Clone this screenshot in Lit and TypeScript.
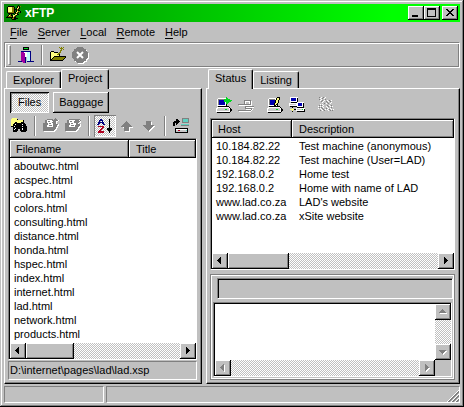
import { LitElement, html, svg, css } from "lit";
import { customElement, property, state } from "lit/decorators.js";
import { classMap } from "lit/directives/class-map.js";

const PALETTE: Record<string, string> = {
  k: "#000000",
  w: "#ffffff",
  y: "#ffff80",
  o: "#808000",
  g: "#00d820",
  b: "#0000b0",
  n: "#000080",
  c: "#60d0c0",
  s: "#c0ffff",
  d: "#808080",
  l: "#c8c8c8",
  m: "#a000a0",
  r: "#b00020",
};

const ICONS: Record<string, string[]> = {
  app: [
    "............k...",
    "..kkkkkk...koko.",
    ".kyyyyook..kyk..",
    ".kyyyyook.kyok..",
    ".kyyyyookkkok...",
    ".kyyyyook.kokk..",
    ".kyyyyook.kyook.",
    ".kooooookkyok.k.",
    "..kkkkkk.kok....",
    "...kok..kyykk...",
    "..kyokkyyok.....",
    ".kooookyok......",
    "kkkkkkkokk......",
    ".....kookkkk....",
    "......kkkk......",
  ],
  exit: [
    ".....kkkkkk.....",
    ".....kggggk.....",
    ".....kkkkkk.....",
    "................",
    "...nnnnnnnnnn...",
    "...mmmwwwsssn...",
    "...mmmmwwsssn...",
    "...mmmmwwsssn...",
    "...mmmmwwsssn...",
    "...mmmmwwsssn...",
    "...mmmmn.sssn...",
    "...mmmmn.sssn...",
    "...mmmmn.sssn...",
    "...mmmmn.sssn...",
    "nnnnmmmn.nnnnnnn",
    ".....mmn........",
  ],
  open: [
    ".........o.o.o..",
    "..........ooo...",
    "...........o.o..",
    "..........oo....",
    ".kkk......o.....",
    "kyyykkkk.oo.....",
    "kyyyyyyyoo......",
    "kyyyyyyook......",
    "kyyyyyyyyk......",
    "kyyykkkkkkkkkkkk",
    "kyykoooooooooook",
    "kykoooooooooook.",
    "kkoooooooooook..",
    "kkkkkkkkkkkkk...",
  ],
  find: [
    ".yyyyy..........",
    "yyyyyyk.........",
    "yyyyyyyyyyyyk...",
    "yyyyyyyyyyyyk...",
    "yyyykkyyyykkk...",
    "yyykkkkkkkkkkk..",
    "yykkwkkkkkkwkkk.",
    "yykkkkkkkkkkkkk.",
    "kkkwkkkkkkkwkkkk",
    "..kkkkkkkkkkkkkk",
    "..kkwkkkkkkwkkkk",
    "..kwkkk..kkwkkkk",
    "..kkkkk..kkkkkkk",
    "..kkkk....kkkkk.",
  ],
  addPage: [
    "............d...",
    "....dddddd.ddd..",
    "..ddwwwwwddddddw",
    "..ddwddwwwdddww.",
    "..ddwwwwwddddw..",
    "dddddwddwwdddw..",
    "dddddwwwwwdddddw",
    "ddddwwdddwddddww",
    "ddddwwwwwwddddw.",
    "dddddddddddddww.",
    "dddddddddddddw..",
    "ddddddddddddww..",
    "dddddddddddww...",
    ".wwwwwwwwwww....",
  ],
  removePage: [
    "................",
    "....ddddddddddd.",
    "..ddwwwwwwddddwd",
    "..ddwddwwddddddw",
    "..ddwwwwwdddddww",
    "dddddwddwwwddw..",
    "dddddwwwwwwddddw",
    "ddddwwdddwdddddw",
    "ddddwwwwwwddddww",
    "dddddddddddddww.",
    "dddddddddddddw..",
    "ddddddddddddww..",
    "dddddddddddww...",
    ".wwwwwwwwwww....",
  ],
  sort: [
    "................",
    "...nn.......k...",
    "..nnnn......k...",
    "..n..n......k...",
    ".nnnnnn.....k...",
    ".nn..nn.....k...",
    "nn....nn....k...",
    "............k...",
    ".rrrrrr.....k...",
    ".....rr.....k...",
    "....rr....kkkkk.",
    "...rr.....kkkkk.",
    "..rr.......kkk..",
    ".rrrrrr.....k...",
    ".rrrrrr.....k...",
  ],
  up: [
    "................",
    "................",
    "................",
    ".......d........",
    "......ddd.......",
    ".....ddddd......",
    "....ddddddd.....",
    "...ddddddddd....",
    "..ddddddddddd...",
    "....wdddddwwww..",
    ".....dddddw.....",
    ".....dddddw.....",
    ".....dddddw.....",
    "......wwwww.....",
  ],
  down: [
    "................",
    "................",
    "................",
    ".....ddddd......",
    ".....dddddw.....",
    ".....dddddw.....",
    ".....dddddw.....",
    "..ddddddddddd...",
    "...dddddddddww..",
    "....dddddddww...",
    ".....dddddww....",
    "......dddww.....",
    ".......dww......",
    "........w.......",
  ],
  transfer: [
    ".........ddddddd",
    "...kk....dcccccd",
    "...kkk...dcccccd",
    ".kkkkkk..dcccccd",
    "kkkkkk...ddddddd",
    "kk.kk...........",
    "kk.k....cccccccc",
    "kk......dddddddd",
    "................",
    "................",
    "..kkkkkkkkkkkkk.",
    "..kwwwwwwwwwwwk.",
    "..kllrrllllllck.",
    "..klllllllllllk.",
    "..kkkkkkkkkkkkk.",
  ],
  connect: [
    "..........g.....",
    ".lwwwwwwwwgg....",
    ".wddddddgggggg..",
    ".wdbbbbbgggggggg",
    ".wdbbbbbggggggg.",
    ".wdbbbbbbwggg...",
    ".wdbbbbbbwgg....",
    ".wdbbbbbbwk.....",
    ".wwwwwwwwwk.....",
    "..kkkkkkkkkkk...",
    ".wwwwwwwwwwwwk..",
    "wwlllllllllllwk.",
    "wllllllllggllwkk",
    "wllllllllllllwkk",
    "wwwwwwwwwwwwwwk.",
    ".kkkkkkkkkkkkk..",
  ],
  disconnect: [
    "................",
    "................",
    "................",
    "......ddddddd...",
    "......dwwwwwdw..",
    "......dw...wdw..",
    "......dw...wdw..",
    "dddddddddddddw..",
    ".wwwwwwwwwwwww..",
    ".......ddddddddd",
    ".......dwwwwwwww",
    ".......ddddddd..",
    "........wwwwwdw.",
    "dddddddddddddw..",
    ".wwwwwwwwwwww...",
  ],
  edit: [
    "..........kkk...",
    ".lwwwwwwwkyyk...",
    ".wddddddwkyyk...",
    ".wdbbbbbkyyk....",
    ".wdbbbbbkyyk....",
    ".wdbbbbbkyyk....",
    ".wdbbbbkyyk.....",
    ".wdbbbbkykk.....",
    ".wwwwwwkkwk.....",
    "..kkkkkkkkkkk...",
    ".wwwwwwwwwwwwk..",
    "wwlllllllllllwk.",
    "wllllllllggllwkk",
    "wllllllllllllwkk",
    "wwwwwwwwwwwwwwk.",
    ".kkkkkkkkkkkkk..",
  ],
  network: [
    ".wwwwwwww.......",
    ".wbbbbbwk.......",
    ".wbbbbbwk.......",
    ".wbbbbbwk.......",
    ".wwwwwwwk.......",
    "..kkkkkkwwwwwww.",
    "wwwwwwwwwbbbbwk.",
    "wllllllwwbbbbwk.",
    "wwwwwwwwwbbbbwk.",
    ".kkkkkkkwwwwwwk.",
    "...k....kkkkkkk.",
    "...y...wwwwwwwww",
    ".yyyykkwlllllgwk",
    "...y...wwwwwwwwk",
    "...k....kkkkkkkk",
  ],
  dimmed: [
    ".d.w.d.w........",
    "..w.d.w.........",
    ".d.w...d........",
    "..w.d.w..w.d.w..",
    "...d.w..d.w.d...",
    "....w....d...w..",
    "......d.w.d.w...",
    "..w.w...........",
    ".d.d.w...d.w.d..",
    "w.w.w...w.d.w.w.",
    ".d.d.w...w...d..",
    "w.w.d...d.w.w...",
    "...w.d.w.w.d.w.w",
    "..d.w.d...w.d.d.",
  ],
};

/** Draws a pixel icon, merging equal neighbours in a row into one run. */
function icon(name: string) {
  const runs: { x: number; y: number; w: number; fill: string }[] = [];
  ICONS[name].forEach((row, y) => {
    for (const m of row.matchAll(/([a-z])\1*/g)) {
      runs.push({ x: m.index ?? 0, y, w: m[0].length, fill: PALETTE[m[1]] });
    }
  });
  return html`<svg class="icon" viewBox="0 0 16 16" width="16" height="16" aria-hidden="true">
    ${runs.map((r) => svg`<rect x=${r.x} y=${r.y} width=${r.w} height="1" fill=${r.fill}></rect>`)}
  </svg>`;
}

const base = css`
  * {
    box-sizing: border-box;
  }
  button,
  input,
  textarea {
    font: inherit;
    color: inherit;
    margin: 0;
    padding: 0;
    border: 0;
    border-radius: 0;
    background: transparent;
    outline: none;
  }
  svg {
    display: block;
    flex: none;
    shape-rendering: crispEdges;
  }
  .raised {
    background: #c0c0c0;
    box-shadow:
      inset -1px -1px #000,
      inset 1px 1px #fff,
      inset -2px -2px #808080;
  }
  .dither {
    background: repeating-conic-gradient(#fff 0% 25%, #c0c0c0 0% 50%) 0 0 / 2px 2px;
  }
`;

const ARROWS: Record<string, string> = {
  left: "M9 4v7h-1v-1h-1v-1h-1v-1h-1v-1h1v-1h1v-1h1v-1z",
  right: "M6 4v7h1v-1h1v-1h1v-1h1v-1h-1v-1h-1v-1h-1v-1z",
  up: "M4 9h7v-1h-1v-1h-1v-1h-1v-1h-1v1h-1v1h-1v1h-1z",
  down: "M4 6h7v1h-1v1h-1v1h-1v1h-1v-1h-1v-1h-1v-1h-1z",
};

@customElement("scroll-bar")
export class ScrollBar extends LitElement {
  @property({ type: Boolean, reflect: true }) vertical = false;
  @property({ type: Boolean }) disabled = false;
  @property({ type: Number }) thumb = 0;

  static styles = [
    base,
    css`
      :host {
        display: flex;
        height: 16px;
      }
      :host([vertical]) {
        flex-direction: column;
        width: 16px;
        height: auto;
      }
      .arrow {
        width: 16px;
        height: 16px;
        flex: none;
      }
      .track {
        flex: 1;
        display: flex;
      }
      .dim {
        fill: #808080;
        filter: drop-shadow(1px 1px #fff);
      }
    `,
  ];

  private arrow(dir: string) {
    return html`<button class="arrow raised" aria-label="Scroll ${dir}" ?disabled=${this.disabled}>
      <svg class=${classMap({ dim: this.disabled })} width="16" height="16" viewBox="0 0 16 16">
        <path d=${ARROWS[dir]}></path>
      </svg>
    </button>`;
  }

  render() {
    return html`
      ${this.arrow(this.vertical ? "up" : "left")}
      <div class="track dither">
        ${this.thumb ? html`<div class="raised" style="width:${this.thumb}%"></div>` : ""}
      </div>
      ${this.arrow(this.vertical ? "down" : "right")}
    `;
  }
}

const FILES = [
  "aboutwc.html",
  "acspec.html",
  "cobra.html",
  "colors.html",
  "consulting.html",
  "distance.html",
  "honda.html",
  "hspec.html",
  "index.html",
  "internet.html",
  "lad.html",
  "network.html",
  "products.html",
];

const HOSTS = [
  ["10.184.82.22", "Test machine (anonymous)"],
  ["10.184.82.22", "Test machine (User=LAD)"],
  ["192.168.0.2", "Home test"],
  ["192.168.0.2", "Home with name of LAD"],
  ["www.lad.co.za", "LAD's website"],
  ["www.lad.co.za", "xSite website"],
];

@customElement("app-root")
export class AppRoot extends LitElement {
  @state() private leftTab = "Project";
  @state() private rightTab = "Status";

  static styles = [
    base,
    css`
      :host {
        display: block;
        font: 11px/14px "Liberation Sans", Arial, sans-serif;
        color: #000;
      }
      .window {
        min-height: 100vh;
        padding: 4px;
        display: flex;
        flex-direction: column;
        background: #c0c0c0;
        box-shadow:
          inset -1px -1px #000,
          inset 1px 1px #c0c0c0,
          inset -2px -2px #808080,
          inset 2px 2px #fff;
      }
      .title {
        height: 18px;
        padding: 0 2px;
        display: flex;
        align-items: center;
        gap: 3px;
        background: linear-gradient(90deg, #008800, #00ff00 85%);
        color: #fff;
      }
      .title h1 {
        flex: 1;
        margin: 0;
        font-size: 12px;
        line-height: 14px;
      }
      .winbtns {
        display: flex;
      }
      .winbtns button {
        width: 16px;
        height: 14px;
      }
      .winbtns .close {
        margin-left: 2px;
      }
      .menu {
        height: 20px;
        padding: 0 1px;
        display: flex;
        align-items: center;
      }
      .menu button {
        padding: 0 5px;
      }
      .menu u {
        text-underline-offset: 2px;
      }
      .toolbar {
        height: 26px;
        padding: 0 3px;
        display: flex;
        align-items: center;
        border: 1px solid #808080;
        border-right-color: #fff;
        border-bottom-color: #fff;
        box-shadow:
          inset 1px 1px #fff,
          inset -1px -1px #808080;
      }
      .tool {
        width: 22px;
        height: 22px;
        flex: none;
        display: grid;
        place-items: center;
      }
      .tool.on {
        box-shadow:
          inset 1px 1px #808080,
          inset -1px -1px #fff;
      }
      .sep {
        width: 2px;
        height: 20px;
        margin: 0 4px;
        border-left: 1px solid #808080;
        border-right: 1px solid #fff;
      }
      .grip {
        width: 3px;
        height: 20px;
        margin-right: 4px;
        border: 1px solid #fff;
        border-right-color: #808080;
        border-bottom-color: #808080;
      }
      .main {
        flex: 1;
        margin: 1px 0 2px;
        display: grid;
        grid-template-columns: 198px minmax(0, 1fr);
        gap: 4px;
      }
      .pane {
        display: flex;
        flex-direction: column;
        min-width: 0;
      }
      .tabs {
        height: 19px;
        padding-left: 2px;
        display: flex;
        align-items: flex-end;
      }
      .tab {
        height: 17px;
        padding: 0 6px;
        border-top: 1px solid #fff;
        border-left: 1px solid #fff;
        border-right: 1px solid #000;
        border-radius: 2px 2px 0 0;
        box-shadow: inset -1px 0 #808080;
      }
      .tab.on {
        position: relative;
        height: 20px;
        margin-bottom: -1px;
        padding: 0 6px 3px;
        background: #c0c0c0;
      }
      .sheet {
        flex: 1;
        display: flex;
        flex-direction: column;
        padding: 3px 4px 3px 3px;
        border: 1px solid #fff;
        border-right-color: #000;
        border-bottom-color: #000;
        box-shadow: inset -1px -1px #808080;
      }
      .switch {
        display: flex;
        gap: 4px;
        padding-left: 2px;
      }
      .switch button {
        height: 21px;
        padding: 0 8px 2px;
      }
      .switch .raised {
        padding: 0 6px 2px;
      }
      .switch .pressed {
        box-shadow:
          inset 1px 1px #000,
          inset -1px -1px #fff,
          inset 2px 2px #808080;
      }
      .tools {
        display: flex;
        align-items: center;
        height: 25px;
      }
      .tools.hosts {
        height: 26px;
        padding-left: 3px;
      }
      .gap {
        width: 7px;
      }
      .list {
        flex: 1;
        display: flex;
        flex-direction: column;
        background: #fff;
        border: 1px solid #808080;
        border-right-color: #fff;
        border-bottom-color: #fff;
        box-shadow: inset 1px 1px #000;
        padding: 1px 0 0 1px;
      }
      table {
        width: 100%;
        table-layout: fixed;
        border-collapse: separate;
        border-spacing: 0;
      }
      .first {
        width: 119px;
      }
      .hosts-first {
        width: 80px;
      }
      th {
        height: 18px;
        padding: 0 6px;
        font-weight: normal;
        text-align: left;
      }
      td {
        height: 14px;
        padding: 0 4px;
        white-space: nowrap;
      }
      th + th,
      td + td {
        padding-left: 7px;
      }
      tbody::before {
        content: "";
        display: block;
        height: 1px;
      }
      .list scroll-bar {
        margin-top: auto;
      }
      .path {
        height: 19px;
        margin-top: 1px;
        padding: 0 1px;
        line-height: 17px;
        border: 1px solid #808080;
        border-right-color: #fff;
        border-bottom-color: #fff;
      }
      .log {
        margin-top: 4px;
        padding: 3px 1px 2px 2px;
        display: flex;
        flex-direction: column;
        gap: 3px;
        border: 1px solid #808080;
        box-shadow:
          inset 1px 1px #fff,
          inset -1px -1px #fff;
      }
      .field {
        height: 21px;
        margin-left: 4px;
        padding: 2px 4px;
      }
      .sunken {
        border: 1px solid #808080;
        border-right-color: #fff;
        border-bottom-color: #fff;
        box-shadow: inset 1px 1px #000;
      }
      .output {
        display: grid;
        grid-template: minmax(56px, 1fr) 16px / minmax(0, 1fr) 16px;
        margin-right: 1px;
        padding: 1px 0 0 1px;
      }
      .output textarea {
        width: 100%;
        height: 100%;
        padding: 2px 4px;
        background: #fff;
        resize: none;
      }
      .output scroll-bar {
        align-self: stretch;
      }
      .status {
        height: 17px;
        display: flex;
        gap: 2px;
      }
      .status div {
        display: flex;
        justify-content: flex-end;
        align-items: flex-end;
        border: 1px solid #808080;
        border-right-color: #fff;
        border-bottom-color: #fff;
      }
      .status .small {
        width: 100px;
      }
      .status .wide {
        flex: 1;
      }
    `,
  ];

  private tool(name: string, label: string, on = false) {
    return html`<button class=${classMap({ tool: true, on, dither: on })} title=${label} aria-label=${label}>
      ${icon(name)}
    </button>`;
  }

  private tabs(names: string[], current: string, pick: (n: string) => void) {
    return html`<div class="tabs" role="tablist">
      ${names.map(
        (n) => html`<button
          role="tab"
          aria-selected=${n === current}
          class=${classMap({ tab: true, on: n === current })}
          @click=${() => pick(n)}
        >${n}</button>`,
      )}
    </div>`;
  }

  render() {
    return html`
      <div class="window">
        <header class="title">
          ${icon("app")}
          <h1>xFTP</h1>
          <div class="winbtns">
            <button class="raised" aria-label="Minimize">
              <svg width="16" height="14"><path d="M4 9h6v2h-6z"></path></svg>
            </button>
            <button class="raised" aria-label="Maximize">
              <svg width="16" height="14"><path fill-rule="evenodd" d="M3 2h9v9h-9zM4 4v6h7v-6z"></path></svg>
            </button>
            <button class="raised close" aria-label="Close">
              <svg width="16" height="14">
                <path d="M4 3h2v1h1v1h2v-1h1v-1h2v1h-1v1h-1v1h-1v1h1v1h1v1h1v1h-2v-1h-1v-1h-2v1h-1v1h-2v-1h1v-1h1v-1h1v-1h-1v-1h-1v-1h-1z"></path>
              </svg>
            </button>
          </div>
        </header>
        <nav class="menu">
          ${["File", "Server", "Local", "Remote", "Help"].map(
            (m) => html`<button><u>${m[0]}</u>${m.slice(1)}</button>`,
          )}
        </nav>
        <div class="toolbar">
          <span class="grip"></span>
          ${this.tool("exit", "Exit")}
          <span class="sep"></span>
          ${this.tool("open", "Open project")}
          <button class="tool" aria-label="Stop">
            <svg width="18" height="18" viewBox="0 0 18 18">
              <circle cx="10" cy="10" r="8" fill="#fff"></circle>
              <circle cx="9" cy="9" r="8" fill="#808080"></circle>
              <path d="M6 6l6 6M12 6l-6 6" stroke="#fff" stroke-width="2" shape-rendering="auto"></path>
            </svg>
          </button>
        </div>
        <main class="main">
          <section class="pane">
            ${this.tabs(["Explorer", "Project"], this.leftTab, (n) => (this.leftTab = n))}
            <div class="sheet">
              <div class="switch">
                <button class="pressed dither">Files</button>
                <button class="raised">Baggage</button>
              </div>
              <div class="tools">
                ${this.tool("find", "Find")}
                <span class="sep"></span>
                ${this.tool("addPage", "Add page")} ${this.tool("removePage", "Remove page")}
                <span class="sep"></span>
                ${this.tool("sort", "Sort", true)} ${this.tool("up", "Move up")}
                ${this.tool("down", "Move down")}
                <span class="sep"></span>
                ${this.tool("transfer", "Transfer")}
              </div>
              <div class="list">
                <table>
                  <thead>
                    <tr><th class="raised first">Filename</th><th class="raised">Title</th></tr>
                  </thead>
                  <tbody>
                    ${FILES.map((f) => html`<tr><td>${f}</td><td></td></tr>`)}
                  </tbody>
                </table>
                <scroll-bar .thumb=${31}></scroll-bar>
              </div>
              <div class="path">D:\\internet\\pages\\lad\\lad.xsp</div>
            </div>
          </section>
          <section class="pane">
            ${this.tabs(["Status", "Listing"], this.rightTab, (n) => (this.rightTab = n))}
            <div class="sheet">
              <div class="tools hosts">
                ${this.tool("connect", "Connect")} ${this.tool("disconnect", "Disconnect")}
                <span class="gap"></span>
                ${this.tool("edit", "Edit host")} ${this.tool("network", "Network")}
                <span class="gap"></span>
                ${this.tool("dimmed", "Synchronize")}
              </div>
              <div class="list">
                <table>
                  <thead>
                    <tr><th class="raised hosts-first">Host</th><th class="raised">Description</th></tr>
                  </thead>
                  <tbody>
                    ${HOSTS.map(([h, d]) => html`<tr><td>${h}</td><td>${d}</td></tr>`)}
                  </tbody>
                </table>
                <scroll-bar .thumb=${29}></scroll-bar>
              </div>
              <div class="log">
                <input class="field sunken" aria-label="Current action" readonly />
                <div class="output sunken">
                  <textarea aria-label="Log"></textarea>
                  <scroll-bar vertical disabled></scroll-bar>
                  <scroll-bar disabled></scroll-bar>
                </div>
              </div>
            </div>
          </section>
        </main>
        <footer class="status">
          <div class="small"></div>
          <div class="wide">
            <svg width="13" height="13">
              <path d="M1 13L13 1M5 13L13 5M9 13L13 9" stroke="#fff"></path>
              <path d="M2 13L13 2M3 13L13 3M6 13L13 6M7 13L13 7M10 13L13 10M11 13L13 11" stroke="#808080"></path>
            </svg>
          </div>
        </footer>
      </div>
    `;
  }
}
